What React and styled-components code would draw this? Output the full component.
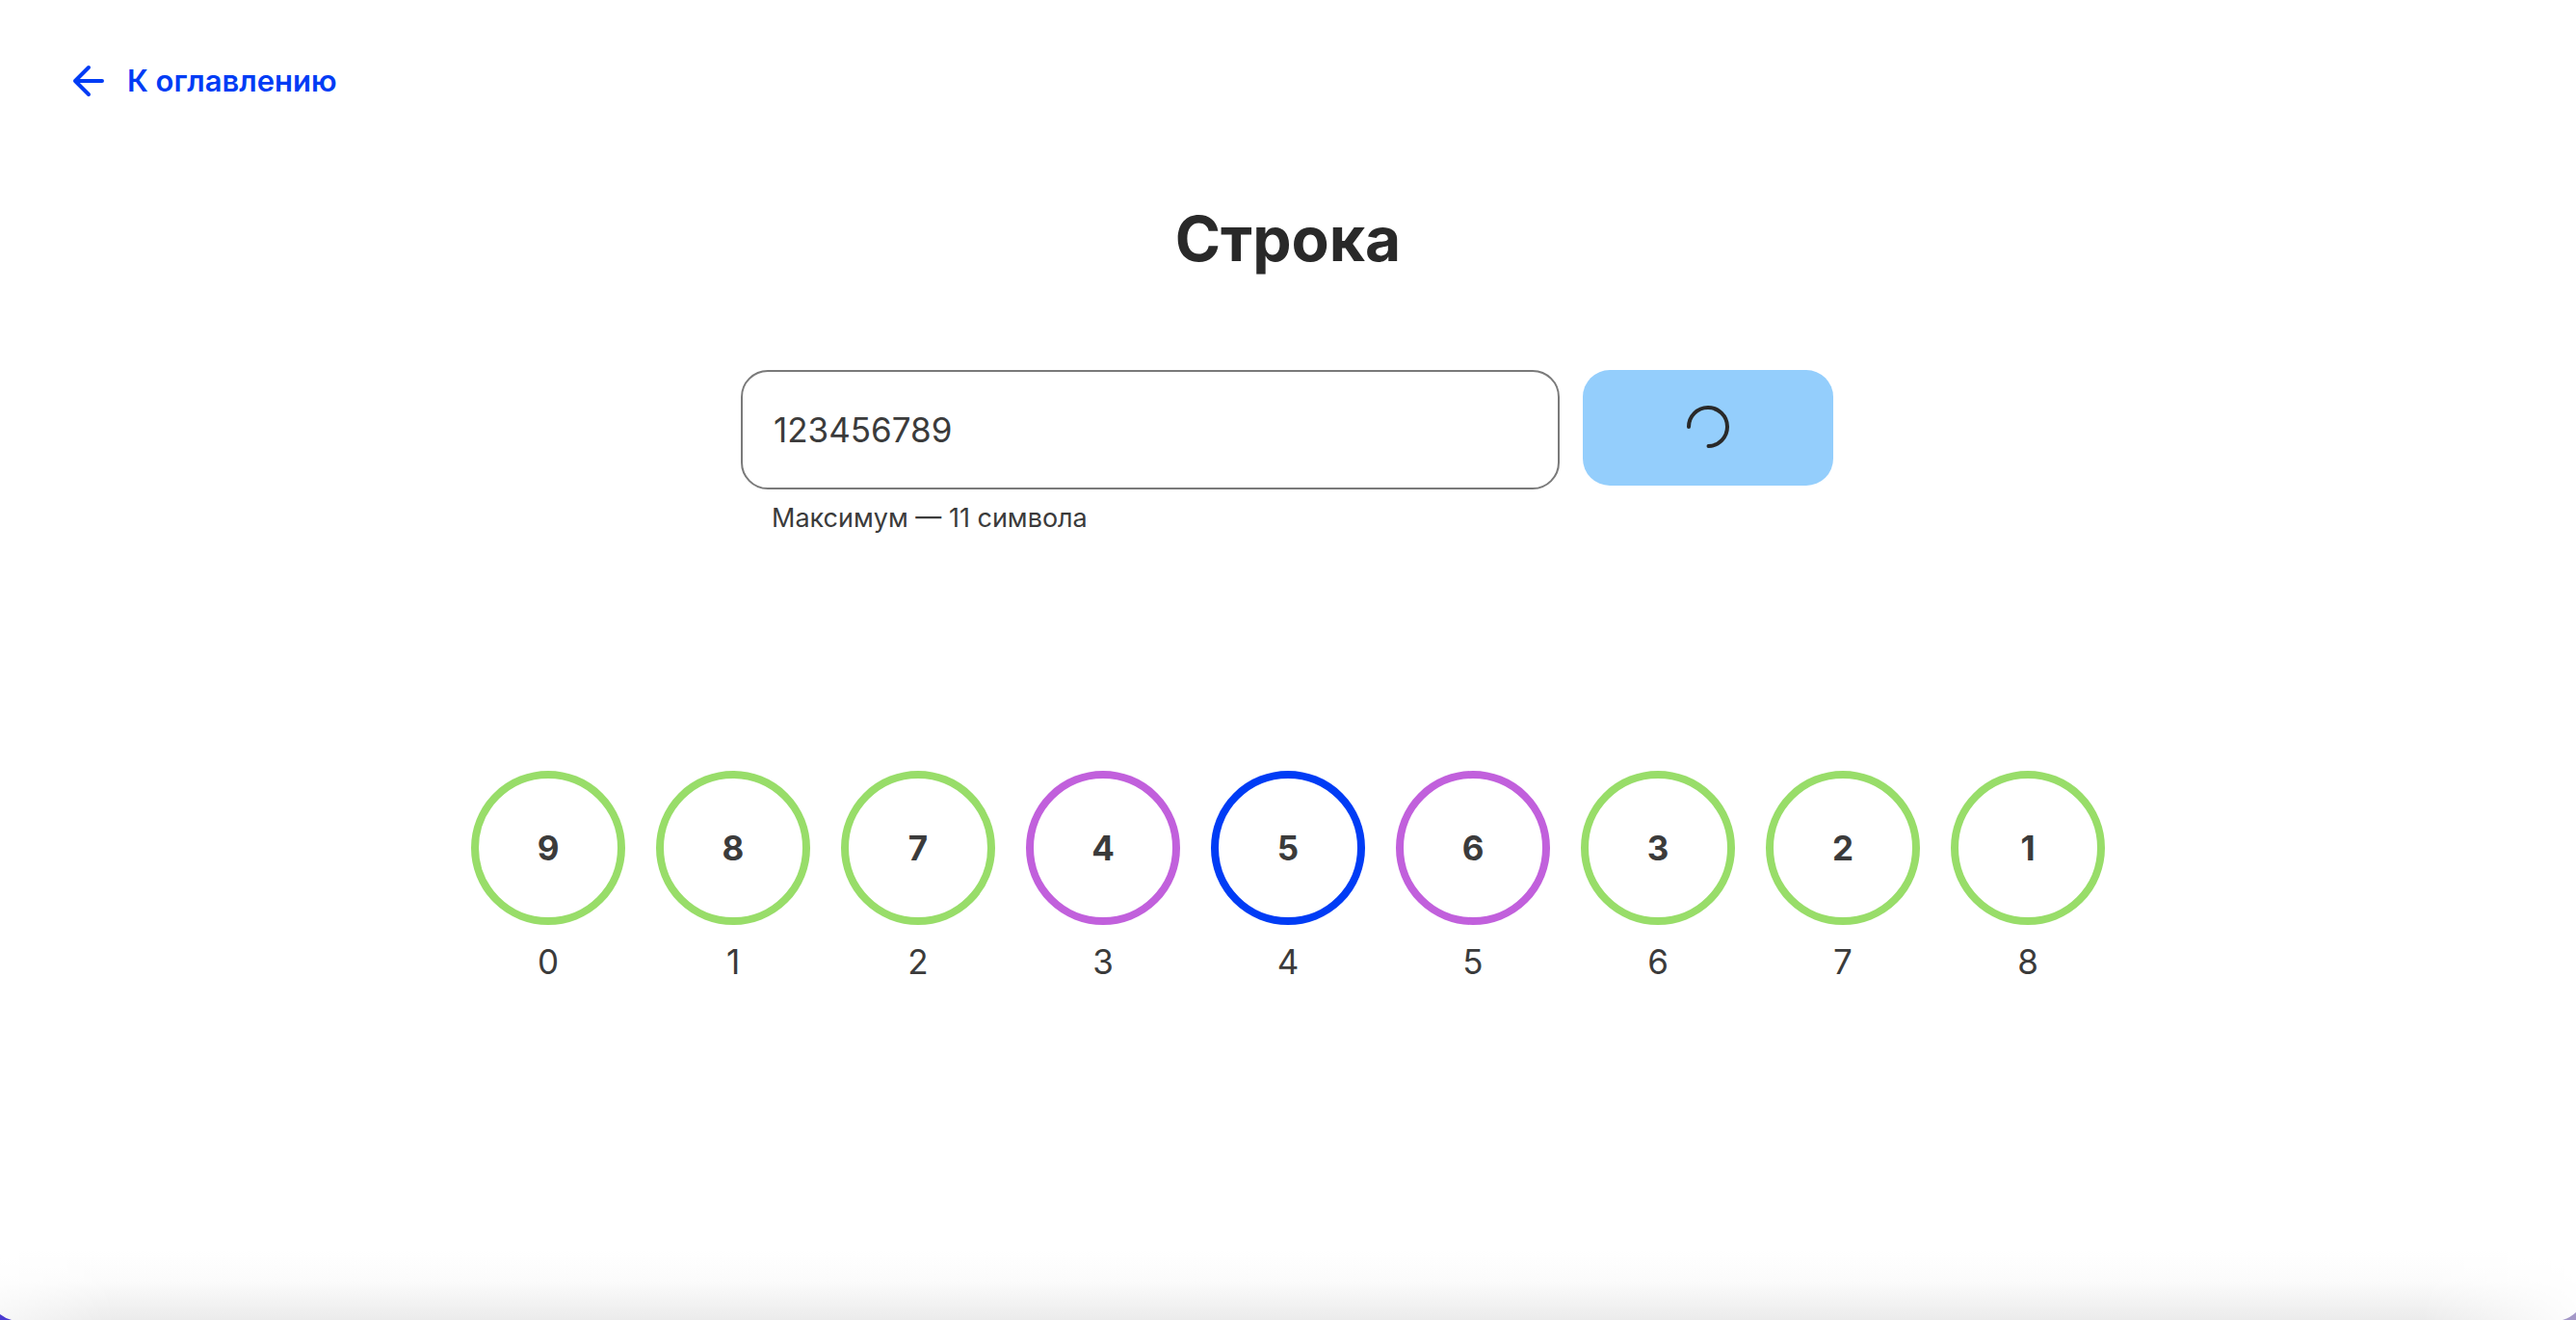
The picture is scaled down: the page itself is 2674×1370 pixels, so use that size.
import React from "react";
import styled, { createGlobalStyle } from "styled-components";

const GlobalStyle = createGlobalStyle`
  *, *::before, *::after { box-sizing: border-box; }
  body {
    margin: 0;
    background: #fff;
    color: #3b3b3b;
    font-family: Inter, "Noto Sans", sans-serif;
  }
`;

const Page = styled.main`
  position: relative;
  display: flex;
  flex-direction: column;
  min-height: 100vh;
  overflow: hidden;
`;

const BackLink = styled.a`
  display: flex;
  align-items: center;
  align-self: flex-start;
  gap: 24px;
  margin: 64px 72px 0;
  color: #003cf5;
  font-size: 31px;
  font-weight: 600;
  line-height: 40px;
  text-decoration: none;
`;

const Title = styled.h1`
  margin: 104px 0 0;
  color: #292929;
  font-size: 64px;
  font-weight: 700;
  line-height: 80px;
  text-align: center;
`;

const Form = styled.form`
  display: flex;
  align-items: flex-start;
  gap: 24px;
  width: 100%;
  max-width: 1136px;
  margin: 96px auto 0;
`;

const Field = styled.div`
  display: flex;
  flex: 0 1 850px;
  flex-direction: column;
  gap: 12px;
`;

const TextInput = styled.input`
  width: 100%;
  height: 124px;
  padding: 0 32px;
  border: 2px solid #7a7a7a;
  border-radius: 28px;
  outline: none;
  background: transparent;
  color: inherit;
  font: 400 35px/44px Inter, "Noto Sans", sans-serif;
`;

const Hint = styled.label`
  padding: 0 32px;
  font-size: 27px;
  line-height: 36px;
`;

const SubmitButton = styled.button`
  display: flex;
  align-items: center;
  justify-content: center;
  flex: 0 0 260px;
  height: 120px;
  padding: 0;
  border: 0;
  border-radius: 28px;
  background: #94cefc;
`;

const Row = styled.ul`
  display: flex;
  justify-content: center;
  gap: 32px;
  margin: 244px 0 0;
  padding: 0;
  list-style: none;
`;

const Item = styled.li`
  display: flex;
  flex-direction: column;
  align-items: center;
  gap: 16px;
  font-size: 35px;
  line-height: 44px;
`;

const ringColors = {
  modified: "#98dd69",
  changing: "#c160dc",
  idle: "#003cf5",
};

const Ring = styled.span`
  display: flex;
  align-items: center;
  justify-content: center;
  width: 160px;
  height: 160px;
  border: 8px solid ${({ $state }) => ringColors[$state]};
  border-radius: 50%;
  font-weight: 700;
`;

const BottomShade = styled.div`
  position: absolute;
  inset: auto 0 0;
  height: 72px;
  background: linear-gradient(to bottom, #fff 0%, #fbfbfb 45%, #ebebeb 100%);
  mask-image: linear-gradient(to right, rgba(0, 0, 0, 0.4), #000 120px, #000 calc(100% - 160px), rgba(0, 0, 0, 0.1));
`;

const Corner = styled.svg`
  position: absolute;
  bottom: 0;
  ${({ $side }) => $side}: 0;
`;

const letters = [
  ["9", "modified"],
  ["8", "modified"],
  ["7", "modified"],
  ["4", "changing"],
  ["5", "idle"],
  ["6", "changing"],
  ["3", "modified"],
  ["2", "modified"],
  ["1", "modified"],
];

function ArrowIcon() {
  return (
    <svg width="36" height="36" viewBox="0 0 36 36" fill="none" stroke="currentColor" strokeWidth="4" strokeLinecap="round" strokeLinejoin="round" aria-hidden="true">
      <path d="M20 4L6 18L20 32M6 18H34" />
    </svg>
  );
}

function LoaderIcon() {
  return (
    <svg width="48" height="48" viewBox="0 0 48 48" fill="none" stroke="#292929" strokeWidth="4" strokeLinecap="round" aria-hidden="true">
      <path d="M4 23A20 20 0 1 1 24.500 43" />
    </svg>
  );
}

export default function App() {
  return (
    <>
      <GlobalStyle />
      <Page>
        <BackLink href="#contents">
          <ArrowIcon />
          К оглавлению
        </BackLink>
        <Title>Строка</Title>
        <Form onSubmit={(event) => event.preventDefault()}>
          <Field>
            <TextInput id="source" type="text" maxLength={11} defaultValue="123456789" />
            <Hint htmlFor="source">Максимум — 11 символа</Hint>
          </Field>
          <SubmitButton type="submit" disabled aria-label="Развернуть">
            <LoaderIcon />
          </SubmitButton>
        </Form>
        <Row>
          {letters.map(([value, state], index) => (
            <Item key={value}>
              <Ring $state={state}>{value}</Ring>
              <span>{index}</span>
            </Item>
          ))}
        </Row>
        <BottomShade />
        <Corner $side="left" width="12" height="6" viewBox="0 0 12 6" aria-hidden="true">
          <path d="M0 0Q5 4 12 6H0Z" fill="#4b3bd0" />
        </Corner>
        <Corner $side="right" width="14" height="8" viewBox="0 0 14 8" aria-hidden="true">
          <path d="M14 0Q9 5 0 8H14Z" fill="#a498c8" />
        </Corner>
      </Page>
    </>
  );
}
